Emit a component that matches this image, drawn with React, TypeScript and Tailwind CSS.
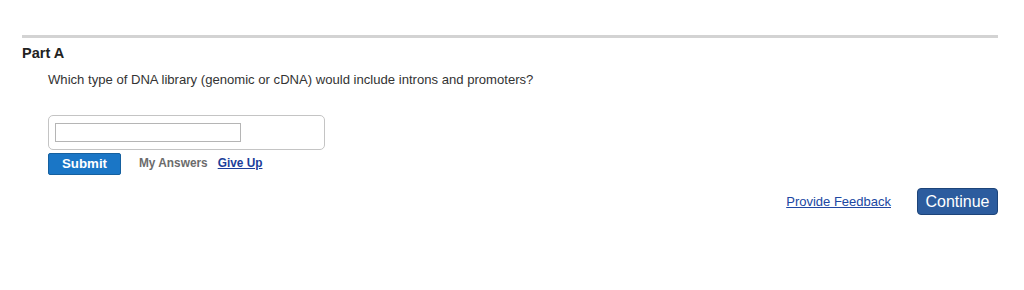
export default function App() {
  return (
    <div className="w-[1024px] h-[290px] bg-white font-['Liberation_Sans',Arial,sans-serif]">
      <div className="pt-[35px] ml-[22px] mr-[26px]">
        <div className="h-[3px] bg-[#d3d3d3]" />
        <h2 className="mt-[7px] text-[14.5px] leading-[17px] font-bold text-[#222]">Part A</h2>
        <div className="ml-[26px]">
          <p className="mt-[10px] text-[13.1px] leading-[16px] text-[#333]">
            Which type of DNA library (genomic or cDNA) would include introns and promoters?
          </p>
          <div className="mt-[27px] w-[277px] h-[35px] border border-[#c4c4c4] rounded-[5px] pl-[6px] pt-[7px]">
            <input
              type="text"
              className="block w-[186px] h-[19px] border border-[#b5b5b5] bg-white outline-none"
            />
          </div>
          <div className="mt-[3px] flex items-center">
            <button className="w-[73px] h-[22px] bg-[#1a76c6] border border-[#15609f] rounded-[2px] text-white text-[13.3px] font-bold leading-none">
              Submit
            </button>
            <span className="ml-[18px] text-[11.85px] font-bold text-[#6b6b6b]">My Answers</span>
            <a href="#" className="ml-[10px] text-[11.85px] font-bold text-[#1b3e9a] underline">Give Up</a>
          </div>
        </div>
        <div className="mt-[13px] flex items-center justify-end">
          <a href="#" className="text-[13px] text-[#2047a2] underline">Provide Feedback</a>
          <button className="ml-[26px] w-[81px] h-[27px] bg-[#2c5c9e] border border-[#1d4479] rounded-[4px] text-white text-[16px] leading-none">
            Continue
          </button>
        </div>
      </div>
    </div>
  );
}
